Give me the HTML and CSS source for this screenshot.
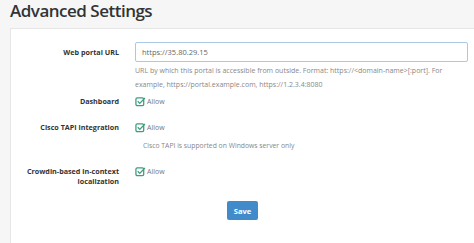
FILE: index.html
```html
<!DOCTYPE html>
<html lang="en">
    <head>
        <meta charset="UTF-8" />
        <meta name="viewport" content="width=device-width, initial-scale=1.0" />
        <title>Advanced Settings</title>
        <link rel="stylesheet" href="styles.css">
    </head>
    <body>
        <h1 class="page-title">Advanced Settings</h1>
        <div class="panel">
            <form class="settings-form">
                <div class="form-row input-row">
                    <label class="row-label">Web portal URL</label>
                    <div class="row-control">
                        <input class="text-input" type="text" value="https://35.80.29.15" />
                        <p class="help-text">
                            URL by which this portal is accessible from outside. Format: https://&lt;domain-name&gt;[:port]. For example, https://portal.example.com, https://1.2.3.4:8080
                        </p>
                    </div>
                </div>
                <div class="form-row">
                    <label class="row-label">Dashboard</label>
                    <div class="row-control">
                        <span class="check">
                            <svg class="check-icon" viewBox="0 0 12 12"><rect x="1" y="2" width="8.5" height="8.5" rx="1.5" /><path d="M3 5.8 L5.2 8 L10.8 2.2" /></svg>
                            Allow
                        </span>
                    </div>
                </div>
                <div class="form-row">
                    <label class="row-label">Cisco TAPI integration</label>
                    <div class="row-control">
                        <span class="check">
                            <svg class="check-icon" viewBox="0 0 12 12"><rect x="1" y="2" width="8.5" height="8.5" rx="1.5" /><path d="M3 5.8 L5.2 8 L10.8 2.2" /></svg>
                            Allow
                        </span>
                        <p class="help-text check-help">Cisco TAPI is supported on Windows server only</p>
                    </div>
                </div>
                <div class="form-row">
                    <label class="row-label">Crowdin-based in-context localization</label>
                    <div class="row-control">
                        <span class="check">
                            <svg class="check-icon" viewBox="0 0 12 12"><rect x="1" y="2" width="8.5" height="8.5" rx="1.5" /><path d="M3 5.8 L5.2 8 L10.8 2.2" /></svg>
                            Allow
                        </span>
                    </div>
                </div>
                <div class="form-actions">
                    <button class="save-button" type="button">Save</button>
                </div>
            </form>
        </div>
    </body>
</html>
```

FILE: styles.css
```css
body {
    margin: 0;
    height: 100vh;
    font-family: "Open Sans", Arial, sans-serif;
    background-color: #f6f6f6;
    color: #333;
    overflow: hidden;
}
.page-title {
    margin: 0;
    padding: 0 0 0 10px;
    height: 28px;
    line-height: 21px;
    font-size: 17px;
    font-weight: 600;
    letter-spacing: -0.5px;
    color: #333;
}
.panel {
    box-sizing: border-box;
    height: calc(100vh - 28px);
    margin-left: 10px;
    margin-right: -1px;
    padding-top: 13px;
    border: 1px solid #e6e6e6;
    border-bottom: none;
    background-color: #ffffff;
}
.form-row {
    display: grid;
    grid-template-columns: 108px 1fr;
    column-gap: 16px;
    margin-bottom: 10px;
}
.input-row {
    margin-bottom: 1px;
}
.row-label {
    text-align: right;
    font-size: 7.2px;
    font-weight: 700;
    line-height: 10px;
    padding-top: 3px;
    color: #333;
}
.input-row .row-label {
    padding-top: 5px;
}
.row-control {
    padding-right: 6px;
}
.text-input {
    display: block;
    box-sizing: border-box;
    width: 100%;
    height: 20px;
    padding: 0 6px;
    border: 1px solid #a9c9e6;
    border-radius: 2px;
    font-family: "Open Sans", Arial, sans-serif;
    font-size: 7.5px;
    color: #666;
    outline: none;
}
.help-text {
    margin: 2px 0 0;
    font-size: 7px;
    line-height: 14px;
    color: #888;
}
.check-help {
    margin-top: 4px;
    padding-left: 8px;
    font-size: 6.8px;
}
.check {
    display: flex;
    align-items: center;
    gap: 1px;
    height: 16px;
    font-size: 7px;
    color: #777;
}
.check-icon {
    width: 11px;
    height: 11px;
    fill: none;
    stroke: #3d9d80;
    stroke-width: 1.4;
}
.form-actions {
    display: flex;
    justify-content: center;
    padding-top: 5px;
}
.save-button {
    width: 31px;
    height: 19px;
    padding: 0;
    border: none;
    border-radius: 2px;
    background-color: #428bca;
    color: #fff;
    font-family: "Open Sans", Arial, sans-serif;
    font-size: 7.5px;
    font-weight: 700;
}
```
